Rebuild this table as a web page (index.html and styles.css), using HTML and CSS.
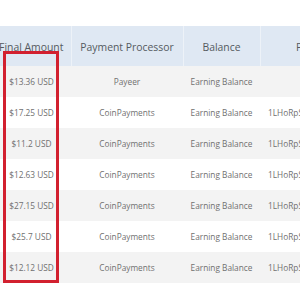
FILE: index.html
```html
<!DOCTYPE html>
<html>
<head>
<meta charset="utf-8">
<link rel="stylesheet" href="styles.css">
</head>
<body>
<div class="wrap">
  <table class="tbl">
    <colgroup>
      <col class="c1"><col class="c2"><col class="c3"><col class="c4">
    </colgroup>
    <thead>
      <tr><th>Final Amount</th><th>Payment Processor</th><th>Balance</th><th>Payment Address</th></tr>
    </thead>
    <tbody>
      <tr><td>$13.36 USD</td><td>Payeer</td><td>Earning Balance</td><td class="left"></td></tr>
      <tr><td>$17.25 USD</td><td>CoinPayments</td><td>Earning Balance</td><td class="left">1LHoRpS</td></tr>
      <tr><td>$11.2 USD</td><td>CoinPayments</td><td>Earning Balance</td><td class="left">1LHoRpS</td></tr>
      <tr><td>$12.63 USD</td><td>CoinPayments</td><td>Earning Balance</td><td class="left">1LHoRpS</td></tr>
      <tr><td>$27.15 USD</td><td>CoinPayments</td><td>Earning Balance</td><td class="left">1LHoRpS</td></tr>
      <tr><td>$25.7 USD</td><td>CoinPayments</td><td>Earning Balance</td><td class="left">1LHoRpS</td></tr>
      <tr><td>$12.12 USD</td><td>CoinPayments</td><td>Earning Balance</td><td class="left">1LHoRpS</td></tr>
    </tbody>
  </table>
  <div class="highlight"></div>
</div>
</body>
</html>
```
FILE: styles.css
```css
html, body {
  margin: 0;
  padding: 0;
  background: #ffffff;
  overflow: hidden;
}
.wrap {
  position: relative;
  padding-top: 26px;
  margin-left: -8px;
}
.tbl {
  border-collapse: collapse;
  table-layout: fixed;
  width: 424px;
  font-family: "Open Sans", "Liberation Sans", sans-serif;
}
.c1 { width: 79px; }
.c2 { width: 112px; }
.c3 { width: 77px; }
.c4 { width: 156px; }
.tbl th {
  background: #dfe8f3;
  color: #555a60;
  font-weight: 400;
  font-size: 10.4px;
  height: 39px;
  padding: 1px 0 0;
  text-align: center;
  border-left: 1px solid #edf2f8;
  white-space: nowrap;
}
.tbl th:first-child { border-left: none; }
.tbl td {
  height: 31px;
  padding: 0;
  font-size: 8.3px;
  color: #707070;
  text-align: center;
  white-space: nowrap;
}
.tbl td.left {
  text-align: left;
  padding-left: 8px;
}
.tbl tbody tr:nth-child(odd) td { background: #f3f3f3; }
.highlight {
  position: absolute;
  left: 11px;
  top: 51px;
  width: 50px;
  height: 226px;
  border: 3px solid #d2202f;
}
```
